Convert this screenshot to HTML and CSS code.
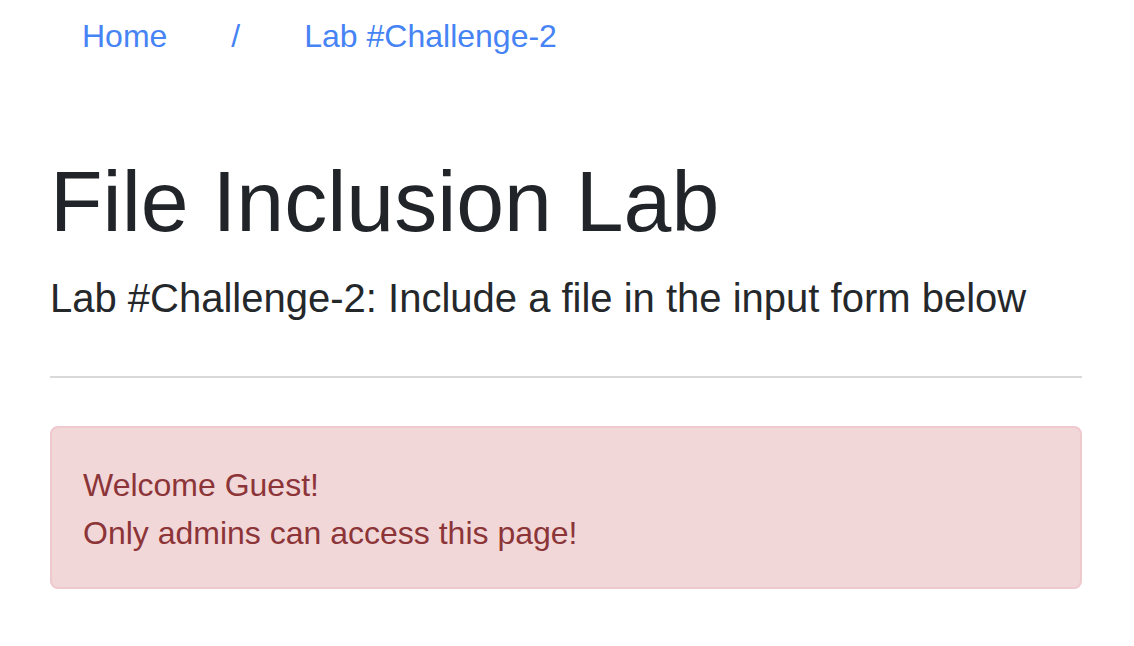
FILE: index.html
```html
<!DOCTYPE html>
<html>
<head>
<meta charset="utf-8">
<title>File Inclusion Lab</title>
<link rel="stylesheet" href="styles.css">
</head>
<body>
<div class="container">
  <nav class="breadcrumb">
    <a href="#" class="crumb">Home</a>
    <span class="sep">/</span>
    <a href="#" class="crumb">Lab #Challenge-2</a>
  </nav>
  <h1 class="title">File Inclusion Lab</h1>
  <p class="lead">Lab #Challenge-2: Include a file in the input form below</p>
  <hr class="divider">
  <div class="alert">
    <div>Welcome Guest!</div>
    <div>Only admins can access this page!</div>
  </div>
</div>
</body>
</html>
```

FILE: styles.css
```css
html, body {
  margin: 0;
  padding: 0;
  background: #ffffff;
}
body {
  font-family: "Liberation Sans", Arial, sans-serif;
  font-size: 32px;
  line-height: 48px;
  color: #212529;
}
.container {
  width: 1032px;
  margin-left: 50px;
}
.breadcrumb {
  display: flex;
  gap: 64px;
  padding: 12px 32px 0;
  height: 48px;
}
.crumb, .sep {
  color: #4683f5;
  text-decoration: none;
}
.title {
  margin: 91px 0 0;
  font-size: 86px;
  line-height: 100px;
  font-weight: 400;
  color: #212529;
}
.lead {
  margin: 17px 0 0;
  font-size: 40px;
  line-height: 60px;
  color: #25282b;
}
.divider {
  margin: 48px 0 0;
  border: 0;
  border-top: 2px solid #d9d9d9;
  height: 0;
}
.alert {
  margin-top: 48px;
  background: #f2d7d9;
  border: 2px solid #efc9cd;
  border-radius: 8px;
  padding: 33px 31px 30px;
  color: #8c3538;
}
```
